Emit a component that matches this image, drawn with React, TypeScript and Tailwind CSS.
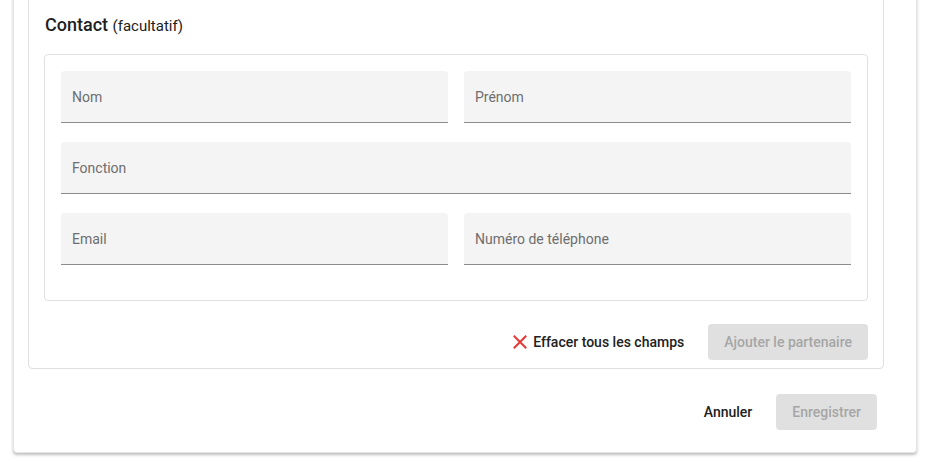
import React from "react";

function Field({ label }: { label: string }) {
  return (
    <div className="h-[52px] bg-[#f4f4f4] rounded-t-[4px] border-b border-[#8c8c8c] flex items-center px-[11px] pt-[2px]">
      <span className="text-[14px] text-[#6e6e6e]">{label}</span>
    </div>
  );
}

function CrossIcon() {
  return (
    <svg width="14" height="14" viewBox="0 0 14 14" className="shrink-0">
      <path d="M1.5 1.5 L12.5 12.5 M12.5 1.5 L1.5 12.5" stroke="#e53935" strokeWidth="2" strokeLinecap="square" />
    </svg>
  );
}

export default function App() {
  return (
    <div className="h-[466px] overflow-hidden bg-white font-['Roboto',sans-serif]">
      <div className="ml-[13px] w-[904px] -mt-[40px] bg-white border border-[#e6e6e6] rounded-b-[4px] shadow-[0_2px_3px_rgba(0,0,0,0.25)] pb-[22px]">
        <div className="ml-[14px] mt-[16px] w-[856px] border border-[#e0e0e0] rounded-[4px] px-[15px] pt-[36px] pb-[8px]">
          <h2 className="text-[18px] font-medium text-[#212121] leading-[21px] mb-[17px] pl-[1px]">
            Contact <span className="text-[15px] font-normal">(facultatif)</span>
          </h2>

          <div className="border border-[#e0e0e0] rounded-[4px] p-[16px]">
            <div className="grid grid-cols-2 gap-x-[16px]">
              <div className="pb-[19px]"><Field label="Nom" /></div>
              <div className="pb-[19px]"><Field label="Prénom" /></div>
              <div className="col-span-2 pb-[19px]"><Field label="Fonction" /></div>
              <div className="pb-[19px]"><Field label="Email" /></div>
              <div className="pb-[19px]"><Field label="Numéro de téléphone" /></div>
            </div>
          </div>

          <div className="mt-[23px] flex justify-end items-center gap-[16px]">
            <button className="h-9 px-2 flex items-center gap-[6px] text-[14px] font-medium text-[#212121]">
              <CrossIcon />
              Effacer tous les champs
            </button>
            <button className="h-9 px-4 rounded-[4px] bg-[#e0e0e0] text-[14px] font-medium text-[#a6a6a6]">
              Ajouter le partenaire
            </button>
          </div>
        </div>

        <div className="mt-[25px] pr-[39px] flex justify-end items-center gap-[16px]">
          <button className="h-9 px-2 text-[14px] font-medium text-[#212121]">Annuler</button>
          <button className="h-9 px-4 rounded-[4px] bg-[#e0e0e0] text-[14px] font-medium text-[#a6a6a6]">
            Enregistrer
          </button>
        </div>
      </div>
    </div>
  );
}
